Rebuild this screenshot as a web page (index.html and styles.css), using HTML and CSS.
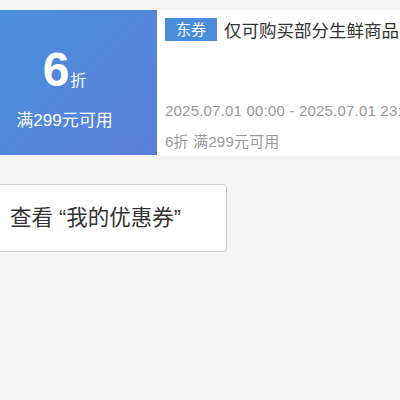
FILE: index.html
```html
<!DOCTYPE html>
<html lang="zh-CN">
<head>
    <meta charset="UTF-8">
    <meta name="viewport" content="width=device-width, initial-scale=1.0">
    <link rel="stylesheet" href="styles.css">
</head>
<body>
    <!-- Coupon card -->
    <div class="coupon">
        <div class="coupon-left">
            <div class="coupon-value">
                <span class="num">6</span><span class="unit">折</span>
            </div>
            <div class="coupon-limit">满299元可用</div>
        </div>
        <div class="coupon-right">
            <div class="coupon-title">
                <span class="tag">东券</span>
                <span class="name">仅可购买部分生鲜商品</span>
            </div>
            <div class="coupon-info">
                <div class="date">2025.07.01 00:00 - 2025.07.01 23:59</div>
                <div class="desc">6折 满299元可用</div>
            </div>
        </div>
    </div>

    <!-- Link to my coupons -->
    <div class="more-btn">查看 “我的优惠券”</div>
</body>
</html>
```

FILE: styles.css
```css
body {
    font-family: "Liberation Sans", "Noto Sans CJK SC", sans-serif;
    margin: 0;
    padding: 0;
    background-color: #f4f4f4;
    overflow: hidden;
}

/* Coupon card */
.coupon {
    display: flex;
    margin-top: 10px;
    height: 146px;
    width: 460px;
    background-color: #fff;
}

.coupon-left {
    width: 157px;
    height: 145px;
    padding-right: 28px;
    box-sizing: border-box;
    background: linear-gradient(135deg, #4a90dc 0%, #5a7ed8 100%);
    color: #fff;
    display: flex;
    flex-direction: column;
    align-items: center;
    justify-content: center;
}

.coupon-value {
    display: flex;
    align-items: baseline;
    margin-top: 10px;
}

.coupon-value .num {
    font-size: 48px;
    font-weight: bold;
    line-height: 52px;
}

.coupon-value .unit {
    font-size: 16px;
    margin-left: 1px;
}

.coupon-limit {
    font-size: 17px;
    margin-top: 10px;
}

.coupon-right {
    flex: 1;
    padding: 7px 0 0 8px;
    display: flex;
    flex-direction: column;
    white-space: nowrap;
    overflow: hidden;
}

.coupon-title {
    display: flex;
    align-items: center;
}

.coupon-title .tag {
    background-color: #4a8edb;
    color: #fff;
    font-size: 15px;
    width: 52px;
    height: 23px;
    line-height: 23px;
    text-align: center;
}

.coupon-title .name {
    margin-left: 7px;
    font-size: 17.5px;
    color: #333;
}

.coupon-info {
    margin-top: 60px;
    color: #999;
    font-size: 15px;
    letter-spacing: 0.2px;
}

.coupon-info .desc {
    margin-top: 11px;
}

/* Button */
.more-btn {
    margin-top: 28px;
    margin-left: -20px;
    width: 247px;
    height: 68px;
    line-height: 66px;
    padding-left: 29px;
    box-sizing: border-box;
    background-color: #fff;
    border: 1px solid #ccc;
    border-radius: 4px;
    font-size: 21.5px;
    color: #333;
}
```
